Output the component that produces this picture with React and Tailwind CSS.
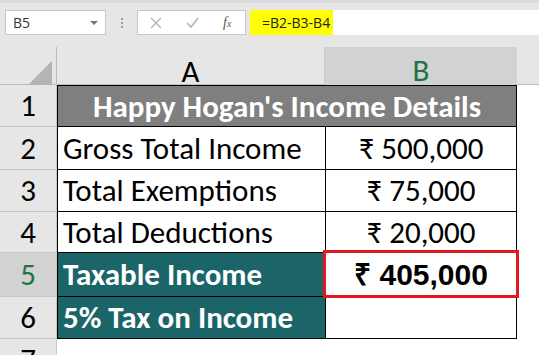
import React from 'react'

const body = { fontFamily: 'Carlito, Lato, "Noto Sans", sans-serif' }

const rows = [
  { n: 2, label: 'Gross Total Income', value: '₹ 500,000', h: 'h-[43px]' },
  { n: 3, label: 'Total Exemptions', value: '₹ 75,000', h: 'h-[42px]' },
  { n: 4, label: 'Total Deductions', value: '₹ 20,000', h: 'h-[41px]' },
]

export default function App() {
  return (
    <div className="w-[539px] h-[355px] overflow-hidden bg-[#e6e6e6]" style={body}>
      {/* Formula bar */}
      <div className="h-[47px] border-t-[3px] border-[#d9d9d9] flex items-start pt-[7px] pl-[5px]">
        <div className="w-[101px] h-[25px] bg-white border border-[#c6c6c6] flex items-center justify-between pl-[7px] pr-[7px] text-[14px] text-[#333] font-['Open_Sans',sans-serif]">
          <span>B5</span>
          <span className="w-0 h-0 border-l-[4px] border-r-[4px] border-t-[4px] border-l-transparent border-r-transparent border-t-[#777]" />
        </div>
        <div className="w-[31px] h-[25px] flex flex-col items-center justify-center gap-[2px]">
          <span className="w-[2px] h-[2px] bg-[#9a9a9a]" />
          <span className="w-[2px] h-[2px] bg-[#9a9a9a]" />
          <span className="w-[2px] h-[2px] bg-[#9a9a9a]" />
        </div>
        <div className="w-[109px] h-[25px] bg-white border border-[#c6c6c6] flex items-center pl-[12px] gap-[24px]">
          <svg width="12" height="12" viewBox="0 0 12 12" className="text-[#b4b4b4]">
            <path d="M1 1 L11 11 M11 1 L1 11" stroke="currentColor" strokeWidth="1.4" fill="none" />
          </svg>
          <svg width="13" height="12" viewBox="0 0 13 12" className="text-[#b4b4b4]">
            <path d="M1 6 L5 10 L12 1" stroke="currentColor" strokeWidth="1.6" fill="none" />
          </svg>
          <span className="text-[14px] italic text-[#555] font-['Liberation_Serif',serif] leading-none">
            f<span className="text-[10px]">x</span>
          </span>
        </div>
        <div className="flex-1 h-[25px] bg-white ml-[4px] flex">
          <div className="w-[83px] h-full bg-[#ffff00] flex items-center pl-[12px] text-[14px] text-[#222] font-['Open_Sans',sans-serif]">
            =B2-B3-B4
          </div>
        </div>
      </div>

      {/* Column headers */}
      <div className="grid grid-cols-[57px_268px_192px_1fr] h-[38px] border-b border-[#bdbdbd]">
        <div className="border-r border-[#bdbdbd] flex items-end justify-end pr-[4px] pb-[3px]">
          <svg width="32" height="32" viewBox="0 0 32 32">
            <polygon points="32,0 32,32 0,32" fill="#b4b4b4" />
          </svg>
        </div>
        <div className="border-r border-[#c8c8c8] flex items-center justify-center text-[31px] text-black">A</div>
        <div className="bg-[#d2d2d2] border-b-2 border-[#217346] flex items-center justify-center text-[31px] text-[#217346]">B</div>
        <div />
      </div>

      {/* Body */}
      <div className="grid grid-cols-[57px_268px_192px_1fr]">
        {/* Row 1 */}
        <RowHead n={1} h="h-[42px]" />
        <div className="col-span-2 h-[42px] bg-[#7f7f7f] border border-black flex items-center justify-center text-[31px] font-bold text-white">
          Happy Hogan's Income Details
        </div>
        <div className="bg-white" />

        {rows.map((r) => (
          <React.Fragment key={r.n}>
            <RowHead n={r.n} h={r.h} />
            <div className={`${r.h} bg-white border-l border-b border-black flex items-center pl-[5px] text-[31px] text-black whitespace-nowrap`}>
              {r.label}
            </div>
            <div className={`${r.h} bg-white border-l border-r border-b border-black flex items-center justify-center text-[31px] text-black`}>
              {r.value}
            </div>
            <div className="bg-white" />
          </React.Fragment>
        ))}

        {/* Row 5 */}
        <RowHead n={5} h="h-[44px]" active />
        <div className="h-[44px] bg-[#1b6568] border-l border-b border-black flex items-center pl-[5px] text-[31px] font-bold text-white whitespace-nowrap">
          Taxable Income
        </div>
        <div className="relative h-[44px] bg-white border-l border-r border-b border-black flex items-center justify-center text-[30px] font-bold text-black font-['Liberation_Sans',sans-serif]">
          ₹ 405,000
          <div className="absolute -left-[3px] -right-[3px] -top-[3px] -bottom-[2px] border-[3px] border-[#e3171e]" />
        </div>
        <div className="bg-white" />

        {/* Row 6 */}
        <RowHead n={6} h="h-[42px]" />
        <div className="h-[42px] bg-[#1b6568] border-l border-b border-black flex items-center pl-[5px] text-[31px] font-bold text-white whitespace-nowrap">
          5% Tax on Income
        </div>
        <div className="h-[42px] bg-white border-l border-r border-b border-black" />
        <div className="bg-white" />

        {/* Row 7 */}
        <RowHead n={7} h="h-[42px]" />
        <div className="col-span-3 bg-white" />
      </div>
    </div>
  )
}

function RowHead({ n, h, active }) {
  return (
    <div
      className={`${h} border-r border-b border-[#c8c8c8] flex items-center justify-center text-[31px] ${
        active ? 'bg-[#d2d2d2] text-[#217346]' : 'bg-[#e6e6e6] text-black'
      }`}
    >
      {n}
    </div>
  )
}
